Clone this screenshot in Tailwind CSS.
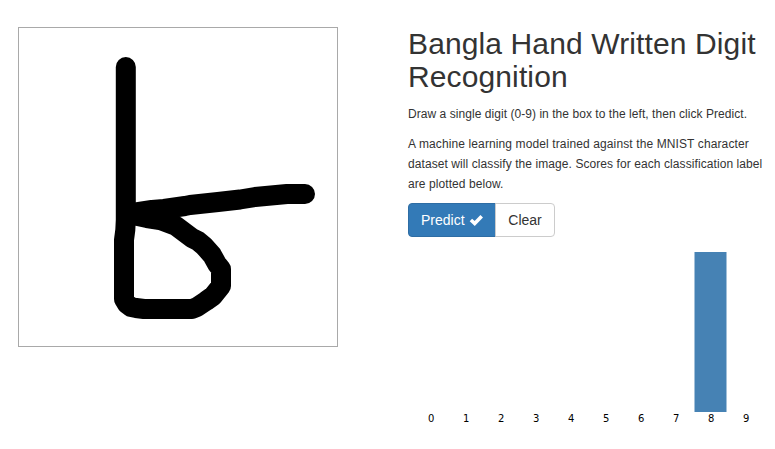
<!DOCTYPE html>
<html lang="en">
<head>
<meta charset="utf-8">
<title>Bangla Hand Written Digit Recognition</title>
<script src="https://cdn.jsdelivr.net/npm/@tailwindcss/browser@4"></script>
</head>
<body class="bg-white text-[#333] overflow-hidden font-['Liberation_Sans',Arial,sans-serif]">
<main class="flex gap-[70px] pl-[18px] pt-[27px]">
  <div class="w-80 h-80 shrink-0 border border-[#a9a9a9]">
    <svg class="block w-full h-full" viewBox="19 28 318 318" fill="none" stroke="#000" stroke-width="20" stroke-linecap="round" stroke-linejoin="round">
      <path d="M125.8 67V220L125.300 230L124 240V299L127 304L131 307L136 308L144 309H192L197 307L206 301L213 296L221 286V269L217 264L212 255L204 246L198 241L192 238L176 226L168 223L160 220L147 218L133 215"/>
      <path d="M126 214L152 210L164 209L185 206L190 205L218 202L240 199.500L255 197L287 194H305"/>
    </svg>
  </div>
  <section class="w-[360px] shrink-0">
    <h1 class="text-[30px] leading-[33px] font-medium mb-[11px] tracking-[0.12px] whitespace-nowrap">Bangla Hand Written Digit<br>Recognition</h1>
    <p class="text-[12px] leading-5 mb-[10px] tracking-[0.052px] whitespace-nowrap">Draw a single digit (0-9) in the box to the left, then click Predict.</p>
    <p class="text-[12px] leading-5 mb-[9px] tracking-[0.08px] whitespace-nowrap"><span class="tracking-[0.115px]">A machine learning model trained against the MNIST character</span><br>dataset will classify the image. Scores for each classification label<br>are plotted below.</p>
    <div class="flex text-sm leading-5">
      <button class="flex h-[34px] w-[88px] items-center gap-1 rounded-l border border-[#2e6da4] bg-[#337ab7] pl-3 text-white">Predict
        <svg class="w-[14px] h-[14px] shrink-0" viewBox="0 0 14 14" fill="none" stroke="#fff" stroke-width="3.600"><path d="M1.900 7L5.700 10.400L12.700 3.300"/></svg>
      </button>
      <button class="h-[34px] w-[60px] -ml-px rounded-r border border-[#ccc] bg-white text-center">Clear</button>
    </div>
    <svg class="mt-[15px] block w-[360px] h-[190px] font-['DejaVu_Sans',sans-serif] text-[10px]" viewBox="0 0 360 190" text-anchor="middle">
      <rect x="286.500" y="0" width="32" height="160" fill="steelblue"/>
      <g fill="#000">
        <text x="23.200" y="170">0</text><text x="58.200" y="170">1</text><text x="93.200" y="170">2</text><text x="128.200" y="170">3</text><text x="163.200" y="170">4</text><text x="198.200" y="170">5</text><text x="233.200" y="170">6</text><text x="268.200" y="170">7</text><text x="303.200" y="170">8</text><text x="338.200" y="170">9</text>
      </g>
    </svg>
  </section>
</main>
</body>
</html>
